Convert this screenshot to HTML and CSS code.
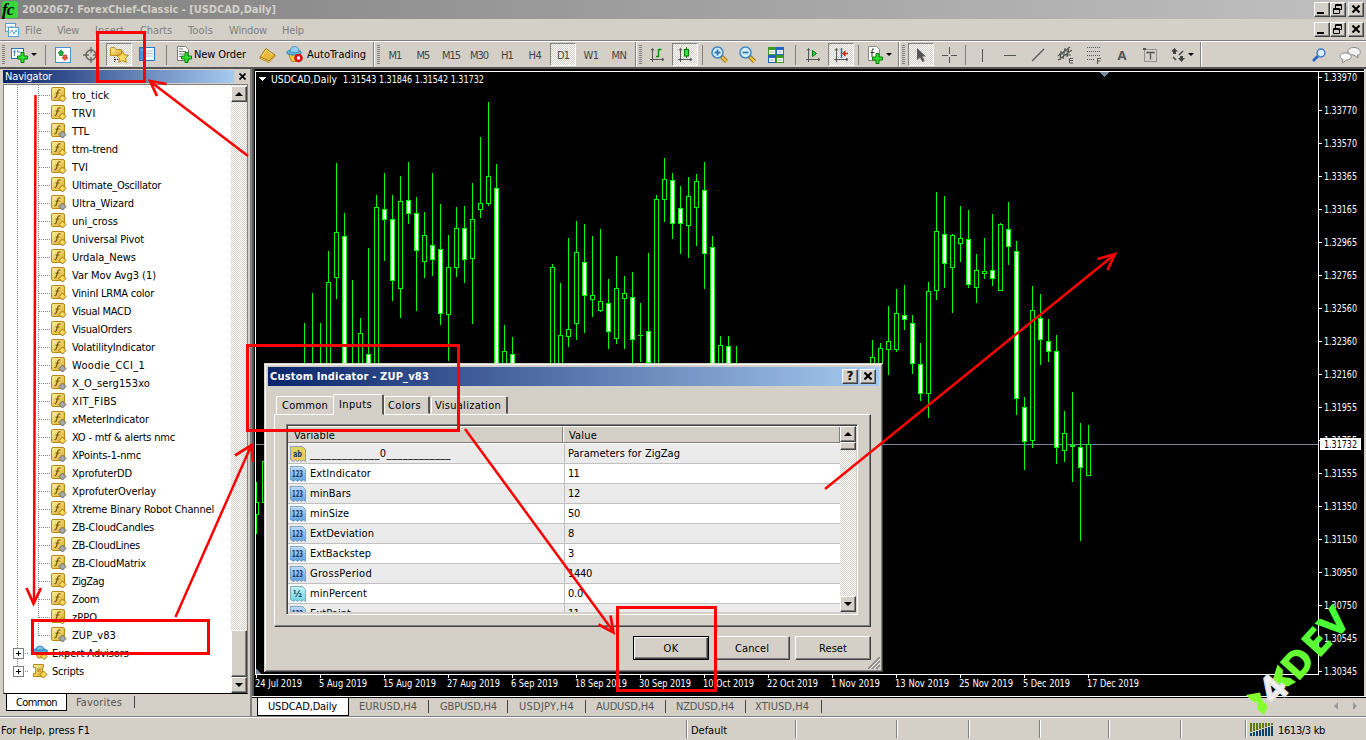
FILE: index.html
```html
<!DOCTYPE html>
<html lang="en">
<head>
<meta charset="utf-8">
<title>2002067: ForexChief-Classic - [USDCAD,Daily]</title>
<link rel="stylesheet" href="styles.css">
</head>
<body>
<svg class="defs" width="0" height="0">
  <defs>
    <linearGradient id="gold" x1="0" y1="0" x2="1" y2="1"><stop offset="0" stop-color="#fdf0a0"/><stop offset="1" stop-color="#d9a928"/></linearGradient>
    <linearGradient id="sky" x1="0" y1="0" x2="0" y2="1"><stop offset="0" stop-color="#c3ddf7"/><stop offset="1" stop-color="#5d9cdd"/></linearGradient>
    <linearGradient id="teal" x1="0" y1="0" x2="0" y2="1"><stop offset="0" stop-color="#c4f6f6"/><stop offset="1" stop-color="#6ed3dc"/></linearGradient>
    <linearGradient id="lime" gradientUnits="userSpaceOnUse" x1="1246" y1="714" x2="1346" y2="610"><stop offset="0" stop-color="#8eff2e"/><stop offset="1" stop-color="#40ff38"/></linearGradient>
    <linearGradient id="limetext" gradientUnits="userSpaceOnUse" x1="-30" y1="0" x2="105" y2="0"><stop offset="0" stop-color="#8eff2e"/><stop offset="1" stop-color="#40ff38"/></linearGradient>
    <symbol id="plus" viewBox="0 0 11 11"><path d="M4 .5h3V4h3.500v3H7v3.500H4V7H.5V4H4z" fill="#2fe02f" stroke="#068206"/></symbol>
    <symbol id="i-newchart" viewBox="0 0 17 16"><rect x=".5" y="1.500" width="12" height="10" fill="#fff" stroke="#3474ac"/><path d="M3.500 3v6M2 5h3M6.500 3v2M6 5h4" stroke="#548cb8"/><use href="#plus" x="6" y="5" width="11" height="11"/></symbol>
    <symbol id="i-market" viewBox="0 0 16 16"><rect x=".5" y=".5" width="15" height="15" fill="#fff" stroke="#4a90cc"/><path d="M6 3l3 3H7.500v2.500h-3V6H3z" fill="#16b43a" stroke="#087d20" stroke-width=".7"/><path d="M10 13.500L7 10.500H8.500V8h3v2.500H13z" fill="#ee5b45" stroke="#b52a1e" stroke-width=".7"/></symbol>
    <symbol id="i-target" viewBox="0 0 16 16"><circle cx="8" cy="8" r="5" fill="none" stroke="#666" stroke-width="1.500"/><path d="M8 0v6M8 10v6M0 8h6M10 8h6" stroke="#666" stroke-width="1.300"/></symbol>
    <symbol id="i-navigator" viewBox="0 0 20 18"><path d="M1.500 2.500q0-1 1-1h3l1.500 2h5.500v6h-11z" fill="url(#gold)" stroke="#c08c18"/><path d="M5.500 11v6M6 13.500h4" stroke="#222" stroke-dasharray="1 1"/><path d="M13.500 5l1.900 3.900 4.100.5-3 2.900.8 4.200-3.800-2-3.700 2 .7-4.200-3-2.900 4.100-.5z" fill="#ffdc60" stroke="#b8800c"/></symbol>
    <symbol id="i-terminal" viewBox="0 0 16 15"><rect x=".5" y=".5" width="15" height="13" fill="#fff" stroke="#277ac2"/><rect x="1" y="1" width="4" height="12" fill="#4a96d8"/><path d="M6 4h8M6 6.500h8M6 9h8M2 3h2" stroke="#a8c0d4"/></symbol>
    <symbol id="i-neworder" viewBox="0 0 16 17"><path d="M1.500 .5h8l3 3v11h-11z" fill="#fff" stroke="#777"/><path d="M3 3h4M3 5.500h7M3 8h6M3 10.500h4" stroke="#777"/><use href="#plus" x="5" y="6" width="11" height="11"/></symbol>
    <symbol id="i-book" viewBox="0 0 17 16"><path d="M1 10L7 1.500l9 6.500-6 6z" fill="#e9b93c" stroke="#a8740c"/><path d="M3 9L7.500 3l6 4.500" fill="none" stroke="#fbe08c"/><path d="M1 10v1.500l9 4 6-6V8l-6 6z" fill="#f4e4b0" stroke="#a8740c" stroke-width=".8"/></symbol>
    <symbol id="i-auto" viewBox="0 0 17 17"><path d="M2.500 8h12l-4 7.500h-5z" fill="#f0c840" stroke="#b58b22"/><ellipse cx="8" cy="6.500" rx="7.500" ry="2.600" fill="#64b4e4" stroke="#3a84b4"/><path d="M4 6q0-5.500 4.500-5.500T13 6q-4 1.500-9 0z" fill="#8fd0f2" stroke="#3a84b4" stroke-width=".8"/><circle cx="12.500" cy="12" r="4.300" fill="#d61414"/><rect x="11" y="10.500" width="3" height="3" fill="#fff"/></symbol>
    <symbol id="axes" viewBox="0 0 16 16"><path d="M3.500 1.500V15M1 12.500h14M2 3.500l1.500-2 1.500 2M13 11l2 1.500-2 1.500" fill="none" stroke="#555"/></symbol>
    <symbol id="i-bars" viewBox="0 0 16 16"><use href="#axes"/><path d="M9.500 2v8M9.500 2.500h3M7 9.500h3" stroke="#128a12" stroke-width="1.400"/></symbol>
    <symbol id="i-candle" viewBox="0 0 16 16"><use href="#axes"/><path d="M9.500 0v11" stroke="#067806"/><rect x="7.500" y="2.500" width="4" height="6.500" fill="#31dd49" stroke="#067806"/></symbol>
    <symbol id="lens" viewBox="0 0 18 18"><path d="M10.500 10.500l5 5" stroke="#8d6a12" stroke-width="4"/><path d="M11 11l4.500 4.500" stroke="#f3c63b" stroke-width="2.400"/><circle cx="6.500" cy="6.500" r="5.500" fill="#d3efff" stroke="#4287bf" stroke-width="1.500"/></symbol>
    <symbol id="i-zoomin" viewBox="0 0 18 18"><use href="#lens"/><path d="M6.500 3.500v6M3.500 6.500h6" stroke="#3576a8" stroke-width="1.800"/></symbol>
    <symbol id="i-zoomout" viewBox="0 0 18 18"><use href="#lens"/><path d="M3.500 6.500h6" stroke="#3576a8" stroke-width="1.800"/></symbol>
    <symbol id="i-tile" viewBox="0 0 16 16"><path d="M0 0h8v8H0zM8 8h8v8H8z" fill="#3a9a1e"/><path d="M8 0h8v8H8zM0 8h8v8H0z" fill="#2263c4"/><path d="M1 3h6v4H1zM9 3h6v4H9zM1 11h6v4H1zM9 11h6v4H9z" fill="#f4f8ff"/><path d="M2 5h4M10 5h4M2 13h4M10 13h4" stroke="#9bb890"/></symbol>
    <symbol id="i-scroll" viewBox="0 0 16 16"><use href="#axes"/><path d="M7.500 3.500v6l4-3z" fill="#2dcc42" stroke="#087808"/></symbol>
    <symbol id="i-shift" viewBox="0 0 16 16"><use href="#axes"/><path d="M8.500 1v10" stroke="#1c6ca8" stroke-width="1.500"/><path d="M10 6.500h5M12.500 4L10 6.500 12.500 9" stroke="#c42812" stroke-width="1.400" fill="none"/></symbol>
    <symbol id="i-indicator" viewBox="0 0 17 18"><path d="M1.500 .5h8l3 3v11h-11z" fill="#fff" stroke="#888"/><path d="M7 3q-2-1-2 2v6M3.500 6.500h4" fill="none" stroke="#333"/><use href="#plus" x="5" y="7" width="11" height="11"/></symbol>
    <symbol id="i-cursor" viewBox="0 0 16 16"><path d="M4 1v12l3-2.500L9.500 15l2-1-2-4.500H13z" fill="#555"/></symbol>
    <symbol id="i-cross" viewBox="0 0 16 16"><path d="M8.500 0v7M8.500 10v6M1 8.500h6M10 8.500h6" stroke="#555"/></symbol>
    <symbol id="i-vline" viewBox="0 0 16 16"><path d="M8.500 2v13" stroke="#555"/></symbol>
    <symbol id="i-hline" viewBox="0 0 16 16"><path d="M2 8.500h12" stroke="#555"/></symbol>
    <symbol id="i-trend" viewBox="0 0 16 16"><path d="M2 14L14 2" stroke="#555" stroke-width="1.200"/></symbol>
    <symbol id="i-channel" viewBox="0 0 18 18"><path d="M1 10L13 1M1 14L15 4M4 5L3 14M8 2L6 13M12 1L10 11M2 8h4M7 5h5M7 9h7" stroke="#555" stroke-width="1.200"/><path d="M16 12.500h-3.500v4.500H16M12.500 14.500H16" stroke="#555" fill="none"/></symbol>
    <symbol id="i-fibo" viewBox="0 0 18 18"><path d="M2 1.500h13M2 5.500h13M2 9.500h13M2 13.500h7" stroke="#555" stroke-dasharray="1 1"/><path d="M16 12.500h-3.500V18M12.500 15h3" stroke="#555" fill="none"/></symbol>
    <symbol id="i-label" viewBox="0 0 16 16"><rect x="2.500" y="2.500" width="12" height="12" fill="none" stroke="#555" stroke-dasharray="1 1"/><path d="M1 1h3v2H1z" fill="#555"/><path d="M5 6.500V5.500h7v1M8.500 5.500v7" fill="none" stroke="#555" stroke-width="1.300"/></symbol>
    <symbol id="i-arrows" viewBox="0 0 16 16"><path d="M4.500 1L8 4.500H6V7H3V4.500H1zM8 11h2V9h3v2h2l-3.500 4z" fill="#444"/><path d="M9 8l4-4M3 10l3 3" stroke="#444" stroke-width="1.500"/></symbol>
    <symbol id="i-search" viewBox="0 0 14 14"><path d="M1 13l5-5" stroke="#2a63c0" stroke-width="2.600"/><circle cx="9" cy="5" r="3.900" fill="#dceeff" stroke="#3d7ccc" stroke-width="1.500"/></symbol>
    <symbol id="i-chat" viewBox="0 0 22 18"><path d="M15 1.500c8 0 7.500 8 3.500 7.500l.5 3-4-3C7 9 7 1.500 15 1.500z" fill="#f3f3f3" stroke="#888"/><path d="M7 7c7 0 6.500 7 .5 7l-4 3 .5-3.500C-.5 12 0 7 7 7z" fill="#fff" stroke="#888"/></symbol>
    <symbol id="i-fx-y" viewBox="0 0 16 16"><rect x=".5" y=".5" width="13" height="13" rx="1.500" fill="url(#gold)" stroke="#b98a14"/><path d="M9.500 3q-2.500-1-3 2.500L5.500 9q-.5 2-2 1.500M4.500 6h4" fill="none" stroke="#7a5808" stroke-width="1.200"/><path d="M11.500 8l3.500 3.500-3.500 3.500L8 11.500z" fill="#ffd95c" stroke="#9c7410"/></symbol>
    <symbol id="i-fx-g" viewBox="0 0 16 16"><rect x=".5" y=".5" width="13" height="13" rx="1.500" fill="url(#gold)" stroke="#b98a14"/><path d="M9.500 3q-2.500-1-3 2.500L5.500 9q-.5 2-2 1.500M4.500 6h4" fill="none" stroke="#7a5808" stroke-width="1.200"/><path d="M11.500 8l3.500 3.500-3.500 3.500L8 11.500z" fill="#a8a8a8" stroke="#686868"/></symbol>
    <symbol id="i-expert" viewBox="0 0 16 16"><path d="M3 8h10l-4 5H6z" fill="#f0c840" stroke="#b58b22"/><ellipse cx="8" cy="6" rx="7.500" ry="2.500" fill="#4fa4dc" stroke="#2d78ac"/><path d="M4 5q0-4 4-4t4 4z" fill="#7cc4ee" stroke="#2d78ac" stroke-width=".8"/><path d="M12 8.500l3 3-3 3-3-3z" fill="#ffd95c" stroke="#9c7410"/></symbol>
    <symbol id="i-script" viewBox="0 0 16 16"><path d="M1.500 1.500h10v3h-1v6h1v3h-10v-3h2v-6h-2z" fill="url(#gold)" stroke="#b98a14"/><path d="M5 6h4M5 8h4" stroke="#a87c18"/><path d="M11.500 8l3.500 3.500-3.500 3.500L8 11.500z" fill="#ffd95c" stroke="#9c7410"/></symbol>
    <symbol id="i-restore" viewBox="0 0 9 10"><path d="M2.500 4V.5h6v5H6.500M2 1.500h7" fill="none" stroke="#000"/><path d="M.5 4.500h6v5h-6zM0 5.500h7" fill="none" stroke="#000"/></symbol>
    <symbol id="i-close" viewBox="0 0 8 8"><path d="M.5.5l7 7M7.500.5l-7 7" stroke="#000" stroke-width="2"/></symbol>
  </defs>
</svg>

<header class="titlebar">
  <span class="logo"><i>fc</i></span>
  <span class="caption" data-w="254">2002067: ForexChief-Classic - [USDCAD,Daily]</span>
  <span class="winbtns"><b class="wb min"></b><b class="wb"><svg width="9" height="10"><use href="#i-restore"/></svg></b><b class="wb close"><svg width="8" height="8"><use href="#i-close"/></svg></b></span>
</header>

<nav class="menubar">
  <svg class="menuicon" viewBox="0 0 14 14"><rect x=".5" y=".5" width="10" height="8" fill="#fff" stroke="#58a0d0"/><rect x="3.500" y="4.500" width="10" height="9" fill="#fff" stroke="#58a0d0"/><path d="M2 4h7M5 10l2-3 2 4 2-4 1 2" fill="none" stroke="#58a0d0"/></svg>
  <span class="mi m1" data-w="17">File</span><span class="mi m2" data-w="22">View</span><span class="mi m3" data-w="29">Insert</span><span class="mi m4" data-w="32">Charts</span><span class="mi m5" data-w="25">Tools</span><span class="mi m6" data-w="38">Window</span><span class="mi m7" data-w="22">Help</span>
  <span class="winbtns"><b class="wb min"></b><b class="wb"><svg width="9" height="10"><use href="#i-restore"/></svg></b><b class="wb close"><svg width="8" height="8"><use href="#i-close"/></svg></b></span>
</nav>

<div class="toolbar">
  <div class="band band1">
    <span class="grip"></span>
    <span class="tb wide1"><svg width="17" height="16"><use href="#i-newchart"/></svg><i class="dd"></i></span>
    <span class="sep"></span>
    <span class="tb"><svg width="16" height="16"><use href="#i-market"/></svg></span>
    <span class="tb"><svg width="16" height="16"><use href="#i-target"/></svg></span>
    <span class="tb on"><svg width="20" height="18"><use href="#i-navigator"/></svg></span>
    <span class="tb"><svg width="16" height="15"><use href="#i-terminal"/></svg></span>
    <span class="sep"></span>
    <span class="tb order"><svg width="16" height="17"><use href="#i-neworder"/></svg><span data-w="52">New Order</span></span>
    <span class="tb"><svg width="17" height="16"><use href="#i-book"/></svg></span>
    <span class="tb auto"><svg width="17" height="17"><use href="#i-auto"/></svg><span data-w="59">AutoTrading</span></span>
  </div>
  <div class="band band2">
    <span class="grip"></span>
    <span class="tb tf"><span data-w="13">M1</span></span><span class="tb tf"><span data-w="13">M5</span></span><span class="tb tf"><span data-w="18">M15</span></span><span class="tb tf"><span data-w="18">M30</span></span><span class="tb tf"><span data-w="12">H1</span></span><span class="tb tf"><span data-w="13">H4</span></span><span class="tb tf on"><span data-w="12">D1</span></span><span class="tb tf"><span data-w="15">W1</span></span><span class="tb tf"><span data-w="15">MN</span></span>
  </div>
  <div class="band band3">
    <span class="grip"></span>
    <span class="tb"><svg width="16" height="16"><use href="#i-bars"/></svg></span>
    <span class="tb on"><svg width="16" height="16"><use href="#i-candle"/></svg></span>
    <span class="sep s7"></span>
    <span class="tb"><svg width="18" height="18"><use href="#i-zoomin"/></svg></span>
    <span class="tb"><svg width="18" height="18"><use href="#i-zoomout"/></svg></span>
    <span class="tb"><svg width="16" height="16"><use href="#i-tile"/></svg></span>
    <span class="sep"></span>
    <span class="tb"><svg width="16" height="16"><use href="#i-scroll"/></svg></span>
    <span class="tb on"><svg width="16" height="16"><use href="#i-shift"/></svg></span>
    <span class="sep s7"></span>
    <span class="tb wide2"><svg width="17" height="18"><use href="#i-indicator"/></svg><i class="dd"></i></span>
  </div>
  <div class="band band4">
    <span class="grip"></span>
    <span class="tb on"><svg width="16" height="16"><use href="#i-cursor"/></svg></span>
    <span class="tb"><svg width="16" height="16"><use href="#i-cross"/></svg></span>
    <span class="sep s5"></span>
    <span class="tb"><svg width="16" height="16"><use href="#i-vline"/></svg></span>
    <span class="tb"><svg width="16" height="16"><use href="#i-hline"/></svg></span>
    <span class="tb"><svg width="16" height="16"><use href="#i-trend"/></svg></span>
    <span class="tb"><svg width="18" height="18"><use href="#i-channel"/></svg></span>
    <span class="tb"><svg width="18" height="18"><use href="#i-fibo"/></svg></span>
    <span class="tb letter">A</span>
    <span class="tb"><svg width="16" height="16"><use href="#i-label"/></svg></span>
    <span class="tb wide2"><svg width="16" height="16"><use href="#i-arrows"/></svg><i class="dd"></i></span>
  </div>
  <div class="band band5"><svg width="14" height="14"><use href="#i-search"/></svg><svg width="22" height="18"><use href="#i-chat"/></svg></div>
</div>

<main class="main">
  <aside class="navigator">
    <div class="navtitle"><span class="navcap"><span data-w="47">Navigator</span></span><svg width="7" height="7"><path d="M.5.5l6 6M6.500.5l-6 6" stroke="#000" stroke-width="1.700"/></svg></div>
    <div class="navbody">
      <div class="tree" id="tree"></div>
      <div class="vscroll nscroll"><b class="sb up"></b><span class="track"></span><b class="sb thumb"></b><b class="sb down"></b></div>
    </div>
    <div class="navtabs"><span class="ntab active"><span data-w="41">Common</span></span><span class="ntab"><span data-w="46">Favorites</span></span></div>
  </aside>

  <section class="workspace">
    <svg id="chart" class="chart" viewBox="252 69 1114 627" width="1114" height="627" shape-rendering="crispEdges"></svg>
    <div class="charttabs">
      <span class="ctab active"><span data-w="69">USDCAD,Daily</span></span><span class="ctab t2"><span data-w="58">EURUSD,H4</span></span><span class="ctab t3"><span data-w="57">GBPUSD,H4</span></span><span class="ctab t4"><span data-w="55">USDJPY,H4</span></span><span class="ctab t5"><span data-w="58">AUDUSD,H4</span></span><span class="ctab t5"><span data-w="58">NZDUSD,H4</span></span><span class="ctab t6"><span data-w="54">XTIUSD,H4</span></span>
      <span class="tabscroll"><i class="la"></i><i class="ra"></i></span>
    </div>
  </section>
</main>

<footer class="status">
  <span class="st c0"><span data-w="89">For Help, press F1</span></span><span class="st c1"><span data-w="36">Default</span></span><span class="st c2"></span><span class="st c3"></span><span class="st c4"></span><span class="st c5"></span><span class="st c6"></span><span class="st c7"></span>
  <span class="st c8"><svg id="signal" width="24" height="14" shape-rendering="crispEdges"></svg><span data-w="47">1613/3 kb</span></span>
</footer>

<div class="dialog">
  <div class="dtitle"><span data-w="159">Custom Indicator - ZUP_v83</span><b class="wb help">?</b><b class="wb close"><svg width="8" height="8"><use href="#i-close"/></svg></b></div>
  <div class="dtabs"><span class="dtab d1"><span data-w="46">Common</span></span><span class="dtab active"><span data-w="33">Inputs</span></span><span class="dtab d3"><span data-w="33">Colors</span></span><span class="dtab d4"><span data-w="66">Visualization</span></span></div>
  <div class="dpage">
    <div class="grid">
      <div class="gmain">
        <div class="ghead"><span class="gh h1"><span data-w="41">Variable</span></span><span class="gh h2"><span data-w="28">Value</span></span></div>
        <div class="grows" id="params"></div>
      </div>
      <div class="vscroll dscroll"><b class="sb up"></b><b class="sb dthumb"></b><span class="track"></span><b class="sb down"></b></div>
    </div>
  </div>
  <div class="dbuttons"><span class="btn ok"><span data-w="15">OK</span></span><span class="btn"><span data-w="34">Cancel</span></span><span class="btn"><span data-w="28">Reset</span></span></div>
  <svg class="sizer" width="12" height="12"><path d="M0 12L12 0M4 12l8-8M8 12l4-4" stroke="#808080" stroke-width="1.500"/><path d="M2 12L12 2M6 12l6-6" stroke="#fff"/></svg>
</div>

<svg class="notes" width="1366" height="740" viewBox="0 0 1366 740">
  <g fill="none" stroke="#f00" stroke-width="3">
    <path d="M97.500 32.500h47v49h-47zM32.500 620.500h176v33h-176zM247.500 345.500h211v85h-211zM617.500 607.500h98v83h-98z"/>
    <path d="M248 156L151 82M35.500 95L34 603M175.500 617L251 446M465 429L613 631M825 489L1114 255" stroke-width="2.500"/>
    <path d="M157 96L150 81L166.500 84M26.500 588L33.500 603.500L41 588M235 455.500L251.500 445L253 462M598.500 624.500L613.500 632.500L610.500 615.500M1097.500 259L1115 254L1107.500 270" stroke-width="2.700"/>
  </g>
  <path d="M1246 695L1260 692.500L1262 700L1268 706L1264 715L1257 709L1258 703L1252 701zM1277.500 664.500L1283 670L1282.500 677L1290 678L1296 682L1288 686.500L1280 685L1273 679L1275.500 671z" fill="url(#lime)"/>
  <g transform="translate(1274 690) rotate(-48)" text-anchor="middle">
    <g fill="url(#limetext)" stroke="url(#limetext)">
      <text class="mark" x="36" y="12">D</text><text class="mark" x="64" y="12">E</text><text class="mark" x="90" y="12">V</text>
    </g>
    <text class="four" x="0" y="12">4</text>
  </g>
</svg>
<script src="script.js"></script>
</body>
</html>
```
FILE: styles.css
```css
* { box-sizing: border-box; }
body { margin: 0; width: 1366px; height: 740px; overflow: hidden; position: relative; display: flex; flex-direction: column; background: #d4d0c8; color: #000; font: 11px/13px Tahoma, "DejaVu Sans Condensed", "DejaVu Sans", sans-serif; font-stretch: condensed; white-space: nowrap; }
.defs { position: absolute; }
svg { display: block; flex: none; }

.titlebar { flex: none; height: 19px; display: flex; align-items: center; padding-right: 2px; background: linear-gradient(90deg, #808080, #c0c0c0); color: #d4d0c8; }
.logo { width: 16px; height: 17px; margin-left: 2px; background: #38d838; color: #000; font: italic bold 17px/17px "Liberation Serif", serif; border-radius: 3px; letter-spacing: -1px; }
.caption { margin-left: 4px; font-weight: bold; }
.winbtns { margin-left: auto; display: flex; }
.wb { position: relative; width: 16px; height: 15px; background: #d4d0c8; border: 1px solid; border-color: #fff #404040 #404040 #fff; box-shadow: inset -1px -1px #808080; display: flex; align-items: center; justify-content: center; }
.winbtns .close { margin-left: 2px; width: 16px; }
.wb svg { margin: 0 1px 1px 0; }
.min::after { content: ""; width: 7px; height: 2px; margin: 6px 3px 0 0; background: #000; }

.menubar { flex: none; height: 22px; display: flex; align-items: center; padding: 0 2px 0 5px; border-bottom: 1px solid #808080; color: #808080; }
.menuicon { width: 14px; height: 14px; }
.mi { padding-top: 1px; }
.m1 { margin-left: 6px; } .m2 { margin-left: 15px; } .m3 { margin-left: 16px; } .m4 { margin-left: 16px; } .m5 { margin-left: 16px; } .m6 { margin-left: 16px; } .m7 { margin-left: 15px; }

.toolbar { flex: none; height: 28px; display: flex; border-top: 1px solid #fff; border-bottom: 2px solid #555; }
.band { display: flex; align-items: center; border-right: 1px solid #808080; box-shadow: 1px 0 #fff; height: 25px; }
.band1 { width: 374px; } .band2 { width: 262px; } .band3 { width: 263px; } .band4 { width: 302px; }
.band5 { margin-left: auto; border: 0; box-shadow: none; gap: 13px; padding-right: 5px; }
.grip { flex: none; width: 3px; height: 20px; margin: 0 3px 0 3px; background: repeating-linear-gradient(#808080 0 1px, #d4d0c8 1px 2px); }
.band1 .grip { margin: 0 3px 0 2px; } .band2 .grip { margin-right: 1px; } .band3 .grip { margin-right: 1px; } .band4 .grip { margin-right: 2px; }
.tb { flex: none; width: 28px; height: 24px; display: flex; align-items: center; justify-content: center; }
.on { width: 26px; margin: 0 1px; height: 23px; border: 1px solid; border-color: #808080 #fff #fff #808080; background: repeating-conic-gradient(#fff 0 25%, #d4d0c8 0 50%) 0 0 / 2px 2px; }
.wide1 { width: 32px; gap: 3px; justify-content: flex-start; padding-left: 3px; }
.wide2 { width: 35px; gap: 2px; justify-content: flex-end; padding-right: 5px; }
.dd { border: 3px solid transparent; border-top-color: #000; border-bottom: 0; }
.order { width: 83px; gap: 2px; justify-content: flex-start; padding-left: 6px; }
.auto { width: 92px; gap: 4px; justify-content: flex-start; padding-left: 5px; }
.tf { color: #444; padding-top: 1px; }
.letter { color: #555; font: bold 13px "Noto Sans", sans-serif; }
.sep { flex: none; width: 9px; height: 20px; background: linear-gradient(#808080, #808080) 5px 0 / 1px 100% no-repeat; }
.s7 { width: 7px; background-position-x: 3px; } .s5 { width: 5px; background-position-x: 2px; }

.main { flex: none; height: 648px; display: flex; }
.navigator { width: 252px; padding: 0 1px 0 3px; display: flex; flex-direction: column; border-right: 2px solid #808080; border-bottom: 1px solid #808080; }
.navtitle { height: 15px; display: flex; align-items: center; }
.navcap { width: 231px; height: 13px; margin-right: 5px; padding-left: 2px; background: linear-gradient(90deg, #0a246a, #a6caf0); color: #fff; }
.navbody { height: 610px; width: 245px; display: flex; border: 1px solid #808080; border-bottom-color: #000; background: #fff; overflow: hidden; }
.tree { flex: 1; padding-top: 1px; overflow: hidden; background: repeating-linear-gradient(#888 0 1px, transparent 1px 2px) 13px 0 / 1px 587px no-repeat, repeating-linear-gradient(#888 0 1px, transparent 1px 2px) 34px 0 / 1px 551px no-repeat; }
.node { height: 18px; display: flex; align-items: center; padding-left: 35px; }
.node::before { content: ""; width: 11px; height: 1px; margin-right: 1px; background: repeating-linear-gradient(90deg, #888 0 1px, transparent 1px 2px); }
.node > svg { margin-right: 5px; }
.root { padding-left: 9px; background: repeating-linear-gradient(90deg, #888 0 1px, transparent 1px 2px) 19px 9px / 6px 1px no-repeat; }
.root::before { width: 9px; height: 9px; margin-right: 8px; border: 1px solid #808080; background: linear-gradient(#000, #000) center / 5px 1px no-repeat, linear-gradient(#000, #000) center / 1px 5px no-repeat, #fff; }
.root > svg { margin-right: 4px; }

.vscroll { display: flex; flex-direction: column; width: 16px; background: repeating-conic-gradient(#fff 0 25%, #d4d0c8 0 50%) 0 0 / 2px 2px; }
.track { flex: 1; }
.sb { flex: none; height: 16px; display: flex; align-items: center; justify-content: center; background: #d4d0c8; border: 1px solid; border-color: #fff #404040 #404040 #fff; box-shadow: inset -1px -1px #808080; }
.up::after, .down::after { content: ""; border: 4px solid transparent; border-bottom-color: #000; border-top: 0; }
.down::after { border: 4px solid transparent; border-top-color: #000; border-bottom: 0; }
.nscroll { padding-top: 1px; }
.thumb { height: 47px; }
.navtabs { display: flex; height: 20px; padding-left: 3px; }
.ntab { height: 18px; padding: 2px 12px 0 9px; border-right: 1px solid transparent; color: #555; }
.ntab.active { width: 61px; padding-right: 0; color: #000; background: #fff; border: 1px solid #000; border-top: 0; height: 17px; }
.ntab:last-child { height: 12px; margin-top: 2px; padding-top: 0; border-right-color: #444; }

.workspace { flex: 1; display: flex; flex-direction: column; }
.charttabs { height: 21px; display: flex; padding-left: 5px; border-top: 1px solid #fff; border-bottom: 1px solid #808080; box-shadow: inset 0 1px #000; }
.ctab { margin: 3px 0 0; height: 13px; padding-left: 10px; border-right: 1px solid #444; color: #555; }
.ctab.active { margin: 0; height: 19px; width: 92px; padding: 2px 0 0 10px; background: #fff; border: 1px solid #000; color: #000; }
.t2 { width: 80px; } .t3 { width: 79px; padding-left: 11px; } .t4 { width: 78px; padding-left: 11px; } .t5 { width: 80px; } .t6 { width: 76px; padding-left: 9px; }
.tabscroll { margin-left: auto; display: flex; gap: 15px; padding: 5px 9px 0 0; }
.tabscroll i { border: 4px solid transparent; height: 8px; }
.tabscroll .la { border-right-color: #999; border-left: 0; } .tabscroll .ra { border-left-color: #999; border-right: 0; }

.status { flex: none; height: 23px; display: flex; align-items: center; border-top: 1px solid #fff; }
.st { height: 18px; display: flex; align-items: center; border-right: 1px solid #808080; box-shadow: 1px 0 #fff; padding: 2px 0 0 4px; }
.c0 { width: 687px; padding-left: 1px; } .c1 { width: 109px; } .c2 { width: 101px; } .c3 { width: 72px; } .c4 { width: 71px; } .c5 { width: 69px; } .c6 { width: 72px; } .c7 { width: 65px; } .c8 { flex: 1; gap: 4px; border: 0; box-shadow: none; }

.dialog { position: absolute; left: 264px; top: 363px; width: 619px; height: 309px; padding: 4px; background: #d4d0c8; box-shadow: inset 1px 1px #d4d0c8, inset -1px -1px #404040, inset 2px 2px #fff, inset -2px -2px #808080; }
.dtitle { height: 19px; width: 611px; display: flex; align-items: center; padding: 0 3px 0 2px; background: linear-gradient(90deg, #0a246a, #a6caf0); color: #fff; font-weight: bold; }
.dtitle .help { margin-left: auto; color: #000; font: bold 12px/13px "DejaVu Sans", sans-serif; }
.dtitle .close { margin-left: 2px; width: 16px; }
.dtabs { height: 28px; display: flex; align-items: flex-end; padding-left: 8px; }
.dtab { height: 18px; padding: 2px 0 0 5px; border: 1px solid; border-color: #fff transparent transparent #fff; border-radius: 2px 2px 0 0; }
.d1 { width: 57px; }
.dtab.active { position: relative; width: 51px; height: 21px; margin-bottom: -1px; background: #d4d0c8; border-right: 2px solid #555; padding-top: 3px; }
.d3 { width: 46px; padding-left: 3px; border-right: 2px solid #555; } .d4 { width: 77px; margin-left: 1px; padding-left: 3px; border-right: 2px solid #555; }
.dpage { margin-left: 6px; width: 597px; height: 213px; padding: 9px 11px; border: 1px solid; border-color: #fff #404040 #404040 #fff; box-shadow: inset -1px -1px #808080; }
.grid { width: 572px; height: 191px; display: flex; border: 1px solid; border-color: #808080 #fff #fff #808080; box-shadow: inset 1px 1px #404040; padding: 1px 1px 2px 1px; }
.gmain { width: 553px; overflow: hidden; background: #fff; }
.ghead { display: flex; height: 17px; background: #d4d0c8; border-top: 1px solid #fff; border-bottom: 1px solid #808080; margin-bottom: 1px; }
.gh { padding: 2px 0 0 6px; border-right: 1px solid #808080; box-shadow: 1px 0 #fff; }
.h1 { width: 275px; } .h2 { width: 277px; }
.prow { height: 20px; display: flex; border-bottom: 1px solid #c0c0c0; background: #fff; }
.prow:nth-child(odd) { background: #ebebeb; }
.pk { width: 277px; display: flex; align-items: center; gap: 4px; padding-left: 2px; border-right: 1px solid #c0c0c0; }
.pv { padding: 3px 0 0 3px; }
.dscroll { width: 16px; }
.dthumb { height: 8px; }
.dbuttons { display: flex; justify-content: flex-end; gap: 5px; padding: 9px 8px 0 0; }
.btn { width: 76px; height: 24px; display: flex; justify-content: center; align-items: center; border: 1px solid; border-color: #fff #404040 #404040 #fff; box-shadow: inset -1px -1px #808080; }
.ok { border-color: #000; box-shadow: inset 1px 1px #fff, inset -1px -1px #404040, inset -2px -2px #808080; }
.sizer { position: absolute; right: 3px; bottom: 3px; }
.badge { font: bold 8px "DejaVu Sans Condensed", "DejaVu Sans", sans-serif; fill: #123c68; }

.chart text { font-size: 11px; fill: #fff; }
.chart text.tag { fill: #000; }
.notes { position: absolute; left: 0; top: 0; }
.mark { font: 900 35px Lato, sans-serif; stroke-width: 1.500px; }
.four { font: 900 37px Lato, sans-serif; fill: #f2f2f2; stroke: #e4e4e4; stroke-width: 2px; }
```
FILE: script.js
```js
const NS = 'http://www.w3.org/2000/svg';

/* Indicators: name, label width, marker colour (y = yellow, g = gray) */
const indicators = [
  ['tro_tick', 37, 'y'], ['TRVI', 24, 'y'], ['TTL', 17, 'g'], ['ttm-trend', 46, 'y'], ['TVI', 16, 'y'],
  ['Ultimate_Oscillator', 89, 'y'], ['Ultra_Wizard', 62, 'g'], ['uni_cross', 46, 'y'], ['Universal Pivot', 72, 'y'],
  ['Urdala_News', 64, 'y'], ['Var Mov Avg3 (1)', 84, 'y'], ['VininI LRMA color', 82, 'y'], ['Visual MACD', 59, 'y'],
  ['VisualOrders', 60, 'y'], ['VolatilityIndicator', 83, 'y'], ['Woodie_CCI_1', 73, 'g'], ['X_O_serg153xo', 78, 'g'],
  ['XIT_FIBS', 45, 'g'], ['xMeterIndicator', 77, 'g'], ['XO - mtf & alerts nmc', 103, 'y'], ['XPoints-1-nmc', 69, 'g'],
  ['XprofuterDD', 60, 'g'], ['XprofuterOverlay', 84, 'g'], ['Xtreme Binary Robot Channel', 142, 'y'],
  ['ZB-CloudCandles', 82, 'g'], ['ZB-CloudLines', 68, 'g'], ['ZB-CloudMatrix', 74, 'g'], ['ZigZag', 32, 'y'],
  ['Zoom', 27, 'y'], ['zPPO', 25, 'y'], ['ZUP_v83', 44, 'g']
];
const esc = s => s.replace(/&/g, '&amp;');
const node = (name, w, icon, cls) =>
  `<div class="node ${cls}"><svg width="16" height="16"><use href="#${icon}"/></svg><span data-w="${w}">${esc(name)}</span></div>`;
document.getElementById('tree').innerHTML =
  indicators.map(([n, w, c]) => node(n, w, 'i-fx-' + c, '')).join('') +
  node('Expert Advisors', 77, 'i-expert', 'root') + node('Scripts', 32, 'i-script', 'root');

/* Input parameters: name, width, value, width, type badge */
const params = [
  ['_____________0____________', 141, 'Parameters for ZigZag', 112, 'ab', '#e9cd62'],
  ['ExtIndicator', 61, '11', 11, '123', 'url(#sky)'], ['minBars', 41, '12', 12, '123', 'url(#sky)'],
  ['minSize', 39, '50', 12, '123', 'url(#sky)'], ['ExtDeviation', 64, '8', 6, '123', 'url(#sky)'],
  ['ExtBackstep', 61, '3', 6, '123', 'url(#sky)'], ['GrossPeriod', 62, '1440', 24, '123', 'url(#sky)'],
  ['minPercent', 57, '0.0', 15, '½', 'url(#teal)'], ['ExtPoint', 41, '11', 11, '123', 'url(#sky)']
];
document.getElementById('params').innerHTML = params.map(([n, w, v, vw, b, f]) =>
  `<div class="prow"><span class="pk"><svg width="16" height="16"><path d="M.5.500h12l3 3v12l-2-1.500-2 1.500-2-1.500-2 1.500-2-1.500-2 1.500-3-2z" fill="${f}" stroke="#5c8cb4" stroke-width=".7"/><text class="badge" x="${b === '123' ? 2 : 3}" y="11" textLength="${b === '123' ? 11 : 9}" lengthAdjust="spacingAndGlyphs">${b}</text></svg><span data-w="${w}">${n}</span></span><span class="pv"><span data-w="${vw}">${v}</span></span></div>`).join('');

/* Candles: x, high, body top, body bottom, low, filled */
const candles = [
  [256,482,502,515,534,0],[264,461,461,503,503,0],
  [304,323,363,370,370,0],[312,293,363,370,370,0],[320,323,363,370,370,0],[328,251,282,380,380,0],[336,163,232,278,299,0],
  [344,213,236,380,380,1],[352,280,363,370,370,0],[360,318,333,380,380,0],[368,248,354,380,380,1],[376,195,207,380,380,0],
  [384,173,209,220,261,1],[392,195,219,281,301,1],[400,176,201,289,318,0],[408,162,200,214,224,1],[416,197,213,251,311,1],
  [424,212,235,262,278,0],[432,173,245,260,276,1],[440,204,249,314,325,1],[448,235,267,315,361,0],[456,207,228,268,277,0],
  [464,206,228,260,283,1],[472,183,219,259,324,0],[480,137,203,210,218,0],[488,102,176,204,206,0],[496,164,188,380,380,1],
  [504,325,351,380,380,0],[512,337,354,380,380,1],[552,264,267,380,380,0],[560,283,335,380,380,0],[568,238,329,337,347,0],
  [576,221,252,324,340,0],[584,224,262,296,333,1],[592,236,295,300,317,0],[600,229,301,311,312,0],[608,279,303,332,349,1],
  [616,256,288,339,344,0],[624,276,293,299,349,0],[632,272,297,340,380,1],[640,303,335,336,362,0],[648,253,331,363,363,1],
  [656,195,199,380,380,0],[664,158,179,200,222,0],[672,173,180,224,239,1],[680,186,208,224,254,1],[688,177,196,226,258,0],
  [696,174,181,208,246,0],[704,162,190,254,289,1],[712,236,247,380,380,1],[720,336,345,380,380,0],[728,336,346,380,380,1],
  [736,346,365,380,380,0],[872,340,357,380,380,0],[880,343,348,380,380,0],[888,306,341,350,375,0],[896,289,313,350,352,0],
  [904,285,315,320,330,1],[912,315,323,364,374,1],[920,343,364,394,401,1],[928,282,291,394,418,0],[936,192,231,291,300,0],
  [944,196,234,264,288,1],[952,234,235,268,313,0],[960,206,238,244,262,0],[968,210,239,285,288,1],[976,254,270,288,303,0],
  [984,238,271,274,279,0],[992,214,270,279,286,1],[1000,223,224,291,291,0],[1008,202,229,247,265,1],[1016,241,251,399,415,1],
  [1024,397,407,442,470,1],[1032,286,310,441,448,0],[1040,294,318,340,365,1],[1048,319,341,352,362,1],[1056,335,351,448,464,1],
  [1064,411,433,451,462,0],[1072,392,445,447,482,2],[1080,423,447,468,541,1],[1088,425,444,476,476,0]
];
const green = '#0f0';
const rect = (x, y, w, h, f) => `<rect x="${x}" y="${y}" width="${w}" height="${h}" fill="${f}"/>`;
const text = (x, y, s, w, c = '') => `<text x="${x}" y="${y}" textLength="${w}" lengthAdjust="spacingAndGlyphs" class="${c}">${s}</text>`;

let g = rect(252, 69, 1114, 627, '#000') + rect(252, 69, 2, 627, '#555') + rect(1364, 69, 2, 627, '#d4d0c8');
g += rect(255, 71, 1111 - 2, 1, '#fff') + rect(255, 71, 1, 604, '#fff') + rect(1318, 71, 1, 604, '#fff') + rect(255, 674, 1064, 1, '#fff');
g += rect(256, 444, 1062, 1, '#778899');
g += '<clipPath id="plot"><rect x="256" y="72" width="1062" height="602"/></clipPath><g clip-path="url(#plot)">';
for (const [x, h, t, b, l, f] of candles) {
  g += rect(x, h, 1, l - h, green) + rect(x - 2, t, 5, b - t, green);
  if (f !== 2 && b - t > 2) g += rect(x - 1, t + 1, 3, b - t - 2, f ? '#fff' : '#000');
}
g += '</g><path d="M1100 72h9l-4.500 5zM256 669v5h5z" fill="#7788a0"/><path d="M259 77h7l-3.500 4z" fill="#fff"/>';
g += `<g>${text(271, 83, 'USDCAD,Daily', 66)}${text(343, 83, '1.31543 1.31846 1.31542 1.31732', 141)}</g>`;

const prices = ['1.33970','1.33770','1.33570','1.33365','1.33165','1.32965','1.32765','1.32560','1.32360','1.32160','1.31955','1.31755','1.31555','1.31350','1.31150','1.30950','1.30750','1.30545','1.30345'];
prices.forEach((p, i) => {
  const y = 77 + 33 * i;
  g += rect(1319, y, 3, 1, '#fff') + text(1324, y + 4, p, 33);
});
g += rect(1320, 438, 41, 12, '#fff') + text(1324, 448, '1.31732', 33, 'tag');

const dates = [['24 Jul 2019', 47], ['5 Aug 2019', 48], ['15 Aug 2019', 53], ['27 Aug 2019', 53], ['6 Sep 2019', 47], ['18 Sep 2019', 52], ['30 Sep 2019', 52], ['10 Oct 2019', 51], ['22 Oct 2019', 51], ['1 Nov 2019', 49], ['13 Nov 2019', 54], ['25 Nov 2019', 54], ['5 Dec 2019', 47], ['17 Dec 2019', 52]];
dates.forEach(([d, w], i) => {
  g += rect(256 + 64 * i, 675, 1, 3, '#fff') + text(255 + 64 * i, 687, d, w);
});
document.getElementById('chart').innerHTML = g;

/* Connection strength bars */
let s = '';
for (let i = 0; i < 8; i++) s += rect(i * 3, 0, 2, 9 - i, '#5c7c10') + rect(i * 3, 10 - i, 2, 3 + i, '#0c4470');
document.getElementById('signal').innerHTML = s;

/* Track each label to its designed width */
document.querySelectorAll('[data-w]').forEach(el => {
  el.style.display = 'inline-block';
  const natural = el.getBoundingClientRect().width;
  el.style.letterSpacing = (el.dataset.w - natural) / el.textContent.length + 'px';
});
```
